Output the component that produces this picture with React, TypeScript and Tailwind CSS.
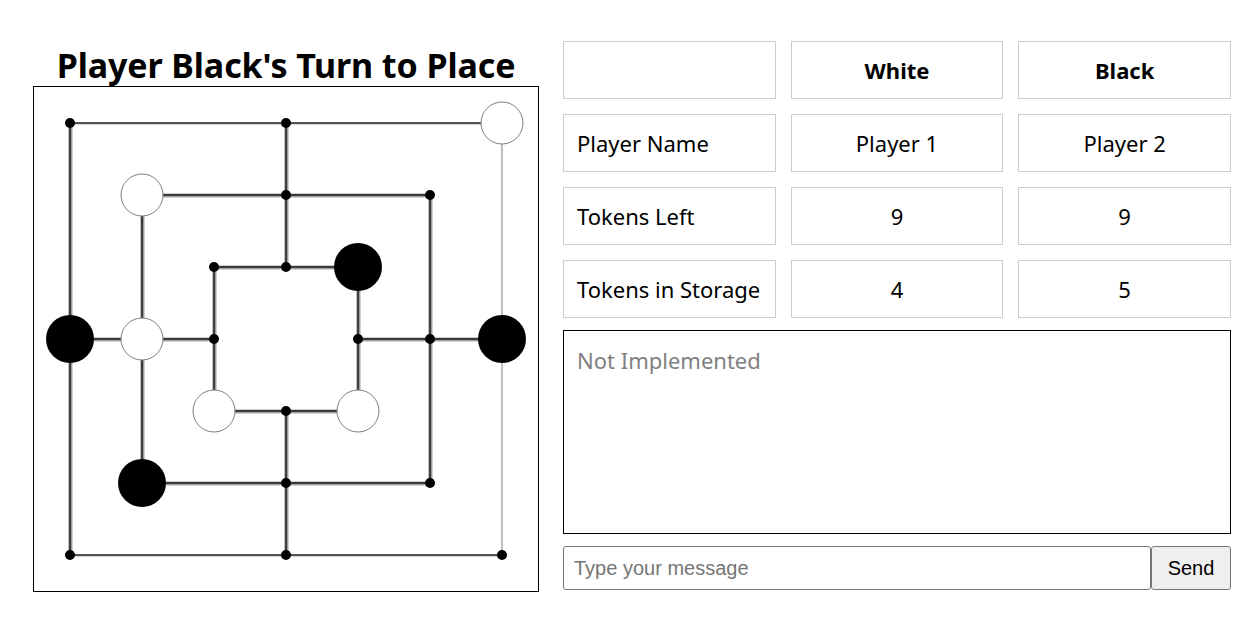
import React from 'react'

const P = (i: number) => 36 + 72 * i

type Seg = { x1: number; y1: number; x2: number; y2: number; kind?: 'thin' | 'light' }

const segs: Seg[] = [
  // outer square
  { x1: 0, y1: 0, x2: 6, y2: 0, kind: 'thin' },
  { x1: 0, y1: 0, x2: 0, y2: 6 },
  { x1: 6, y1: 0, x2: 6, y2: 6, kind: 'light' },
  { x1: 0, y1: 6, x2: 6, y2: 6, kind: 'thin' },
  // middle square
  { x1: 1, y1: 1, x2: 5, y2: 1 },
  { x1: 1, y1: 1, x2: 1, y2: 5 },
  { x1: 5, y1: 1, x2: 5, y2: 5 },
  { x1: 1, y1: 5, x2: 5, y2: 5 },
  // inner square
  { x1: 2, y1: 2, x2: 4, y2: 2 },
  { x1: 2, y1: 2, x2: 2, y2: 4 },
  { x1: 4, y1: 2, x2: 4, y2: 4 },
  { x1: 2, y1: 4, x2: 4, y2: 4 },
  // cross lines
  { x1: 3, y1: 0, x2: 3, y2: 2 },
  { x1: 3, y1: 4, x2: 3, y2: 6 },
  { x1: 0, y1: 3, x2: 2, y2: 3 },
  { x1: 4, y1: 3, x2: 6, y2: 3 },
]

// 0 empty, 1 white, 2 black
const spots: [number, number, number][] = [
  [0, 0, 0], [3, 0, 0], [6, 0, 1],
  [1, 1, 1], [3, 1, 0], [5, 1, 0],
  [2, 2, 0], [3, 2, 0], [4, 2, 2],
  [0, 3, 2], [1, 3, 1], [2, 3, 0], [4, 3, 0], [5, 3, 0], [6, 3, 2],
  [2, 4, 1], [3, 4, 0], [4, 4, 1],
  [1, 5, 2], [3, 5, 0], [5, 5, 0],
  [0, 6, 0], [3, 6, 0], [6, 6, 0],
]

function Board() {
  return (
    <div className="w-[506px] h-[506px] border border-black">
      <svg width="504" height="504" viewBox="0 0 504 504">
        {segs.map((s, i) => {
          const x1 = P(s.x1), y1 = P(s.y1), x2 = P(s.x2), y2 = P(s.y2)
          if (s.kind === 'light') return <line key={i} x1={x1} y1={y1} x2={x2} y2={y2} stroke="#a8a8a8" strokeWidth={1.5} />
          if (s.kind === 'thin') return (
            <g key={i}>
              <line x1={x1} y1={y1 + 1} x2={x2} y2={y2 + 1} stroke="#c8c8c8" strokeWidth={1.5} />
              <line x1={x1} y1={y1} x2={x2} y2={y2} stroke="#555" strokeWidth={1.8} />
            </g>
          )
          const vert = x1 === x2
          return (
            <g key={i}>
              <line x1={x1 + (vert ? 1.5 : 0)} y1={y1 + (vert ? 0 : 1.5)} x2={x2 + (vert ? 1.5 : 0)} y2={y2 + (vert ? 0 : 1.5)} stroke="#c4c4c4" strokeWidth={2.5} />
              <line x1={x1} y1={y1} x2={x2} y2={y2} stroke="#3c3c3c" strokeWidth={2.6} />
            </g>
          )
        })}
        {spots.map(([cx, cy, t], i) => {
          const x = P(cx), y = P(cy)
          if (t === 1) return <circle key={i} cx={x} cy={y} r={21} fill="#fff" stroke="#808080" strokeWidth={1} />
          if (t === 2) return <circle key={i} cx={x} cy={y} r={24} fill="#000" />
          return <circle key={i} cx={x} cy={y} r={5} fill="#000" />
        })}
      </svg>
    </div>
  )
}

function Cell({ children, left, bold }: { children?: React.ReactNode; left?: boolean; bold?: boolean }) {
  return (
    <div
      className={`h-[58px] border border-[#cccccc] flex items-center text-[22px] text-black ${left ? 'justify-start pl-[13px]' : 'justify-center'} ${bold ? 'font-bold' : ''}`}
    >
      {children}
    </div>
  )
}

export default function App() {
  return (
    <div className="bg-white min-h-[618px] flex gap-6 pl-[33px] pr-[22px] pt-[41px]" style={{ fontFamily: '"Noto Sans", "Open Sans", sans-serif' }}>
      <div className="w-[506px] flex flex-col">
        <h1 className="text-[34px] leading-[42px] font-bold text-center text-black mt-[3px] tracking-[-0.1px]">Player Black's Turn to Place</h1>
        <Board />
      </div>
      <div className="flex-1 flex flex-col">
        <div className="grid grid-cols-3 gap-x-[15px] gap-y-[15px]">
          <Cell />
          <Cell bold>White</Cell>
          <Cell bold>Black</Cell>
          <Cell left>Player Name</Cell>
          <Cell>Player 1</Cell>
          <Cell>Player 2</Cell>
          <Cell left>Tokens Left</Cell>
          <Cell>9</Cell>
          <Cell>9</Cell>
          <Cell left>Tokens in Storage</Cell>
          <Cell>4</Cell>
          <Cell>5</Cell>
        </div>
        <div className="mt-[12px] h-[204px] border border-black px-[13px] pt-[13px] text-[22px] leading-[32px] text-[#808080]">
          Not Implemented
        </div>
        <div className="mt-[12px] flex h-[44px]" style={{ fontFamily: '"Liberation Sans", Arial, sans-serif' }}>
          <input
            placeholder="Type your message"
            className="flex-1 h-full border border-[#767676] rounded-[3px] px-[10px] text-[20px] placeholder:text-[#757575] outline-none"
          />
          <button className="w-[80px] h-full border border-[#767676] rounded-[3px] bg-[#efefef] text-[20px] text-black">Send</button>
        </div>
      </div>
    </div>
  )
}
